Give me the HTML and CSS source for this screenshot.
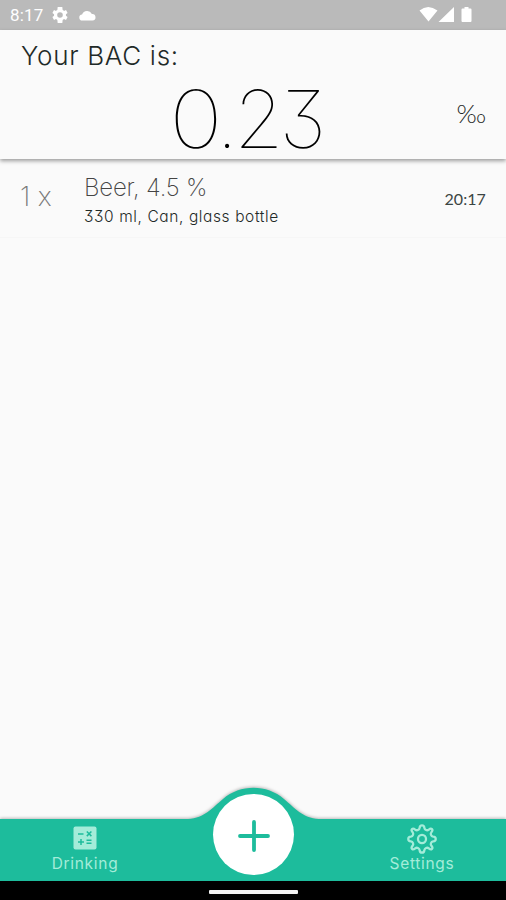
FILE: index.html
```html
<!DOCTYPE html>
<html lang="en">
<head>
    <meta charset="UTF-8">
    <meta name="viewport" content="width=device-width, initial-scale=1.0">
    <title>BAC Calculator</title>
    <link rel="stylesheet" href="styles.css">
</head>
<body>
    <!-- Status Bar -->
    <div class="status-bar">
        <span class="clock">8:17</span>
        <svg class="status-gear" width="16" height="16" viewBox="2 2 20 20">
            <path fill="#fff" fill-rule="evenodd" d="M19.4 13c.1-.7.1-1.3 0-2l2.1-1.6-2-3.5-2.5 1a7 7 0 0 0-1.7-1L14.900 2h-5.800l-.4 3.900a7 7 0 0 0-1.700 1l-2.500-1-2 3.500L4.600 11a8 8 0 0 0 0 2l-2.100 1.600 2 3.500 2.500-1a7 7 0 0 0 1.700 1l.4 3.900h5.800l.4-3.900a7 7 0 0 0 1.700-1l2.500 1 2-3.500zM12 15.500a3.500 3.500 0 1 1 0-7 3.500 3.500 0 0 1 0 7z"/>
        </svg>
        <svg class="status-cloud" width="17" height="11" viewBox="0 0 17 11">
            <path fill="#fff" d="M3.500 10.500a3 3 0 0 1-.4-6 5.400 5.400 0 0 1 9.800-.600 3.300 3.300 0 0 1 .6 6.600z"/>
        </svg>
        <svg class="status-signals" width="56" height="18" viewBox="0 0 56 18">
            <path fill="#fff" d="M.5 4.500Q9-2.500 18.500 4.500L9.500 15.500zM35 1v15H19.500zM43.500 2.500h2V1h4v1.500h2q1 0 1 1V15q0 1-1 1h-8q-1 0-1-1V3.500q0-1 1-1z"/>
        </svg>
    </div>

    <!-- BAC Result -->
    <div class="bac-header">
        <h1>Your BAC is:</h1>
        <div class="bac-row">
            <span class="bac-value"><span class="wide-digit">0</span>.23</span>
            <span class="bac-unit">‰</span>
        </div>
    </div>

    <!-- Drinks -->
    <div class="drink-list">
        <div class="drink-item">
            <span class="drink-count">1 x</span>
            <div class="drink-info">
                <div class="drink-name">Beer, 4.5 %</div>
                <div class="drink-details">330 ml, Can, glass bottle</div>
            </div>
            <span class="drink-time">20:17</span>
        </div>
    </div>

    <!-- Bottom Navigation -->
    <div class="bottom-nav">
        <svg class="nav-shape" width="506" height="96" viewBox="0 0 506 96">
            <path fill="#1dbc9c" d="M0 34H188C205 33 212 23 223 14C240 -1 267 -1 284 14C295 23 302 33 319 34H506V96H0z"/>
        </svg>
        <a class="nav-item" href="#">
            <svg width="24" height="24" viewBox="0 0 24 24">
                <rect x="0.500" y="0.500" width="23" height="23" rx="2" fill="#a4ecd9"/>
                <path fill="none" stroke="#1dbc9c" stroke-width="1.500" d="M5 8h5.500M13.800 5.500l4.600 4.600M18.400 5.500l-4.600 4.600M5 16h6M8 13v6M13.500 14.300h5M13.500 17.300h5"/>
            </svg>
            <span>Drinking</span>
        </a>
        <button class="add-btn">
            <svg width="34" height="34" viewBox="0 0 34 34">
                <path stroke="#1dbc9c" stroke-width="3.800" stroke-linecap="round" d="M17 3v28M3 17h28"/>
            </svg>
        </button>
        <a class="nav-item nav-settings" href="#">
            <svg width="30" height="30" viewBox="0.5 0.5 29 29" fill="none" stroke="#a4ecd9" stroke-width="2.200" stroke-linejoin="round">
                <path d="M12.700 4.200C12.900 .9 17.100 .9 17.300 4.200C17.600 6.300 19.900 7.200 21.600 5.900C24.100 3.700 26.300 5.900 24.100 8.400C22.800 10.100 23.700 12.400 25.800 12.700C29.100 12.900 29.100 17.100 25.800 17.300C23.700 17.600 22.800 19.900 24.100 21.600C26.300 24.100 24.100 26.300 21.600 24.100C19.900 22.800 17.600 23.700 17.300 25.800C17.100 29.100 12.900 29.100 12.700 25.800C12.400 23.700 10.100 22.800 8.400 24.100C5.900 26.300 3.700 24.100 5.900 21.600C7.200 19.900 6.300 17.600 4.200 17.300C.9 17.100 .9 12.900 4.200 12.700C6.300 12.400 7.200 10.100 5.900 8.400C3.700 5.900 5.900 3.700 8.400 5.900C10.100 7.200 12.400 6.300 12.700 4.200z"/>
                <circle cx="15" cy="15" r="3.900"/>
            </svg>
            <span>Settings</span>
        </a>
    </div>

    <!-- System Gesture Bar -->
    <div class="gesture-bar"><div class="gesture-handle"></div></div>
</body>
</html>
```
FILE: styles.css
```css
/* General Styles */
body {
    font-family: Inter, 'Open Sans', sans-serif;
    font-feature-settings: "cv09" 1, "cv11" 1;
    margin: 0;
    height: 900px;
    display: flex;
    flex-direction: column;
    overflow: hidden;
    background-color: #fafafa;
    color: #1f2a28;
}

svg {
    display: block;
}

.status-bar {
    height: 30px;
    display: flex;
    align-items: center;
    background-color: #bababa;
    color: white;
    font-family: Roboto, sans-serif;
    font-size: 17px;
    letter-spacing: 0.2px;
}

.clock {
    width: 42px;
    padding-left: 10px;
    line-height: 32px;
}

.status-cloud {
    margin-left: 11px;
}

.status-signals {
    margin-left: auto;
    margin-right: 31px;
}

.bac-header {
    height: 129px;
    box-shadow: 0 2px 4px rgba(0, 0, 0, 0.38);
}

h1 {
    margin: 0;
    padding: 8px 21px 0;
    font-size: 26px;
    line-height: 36px;
    font-weight: 300;
    letter-spacing: 0.7px;
}

.bac-row {
    display: grid;
    grid-template-columns: 1fr 150px 1fr;
    padding: 0 20px 0 8px;
}

.bac-value {
    grid-column: 2;
    font-size: 80px;
    line-height: 90px;
    font-weight: 100;
    letter-spacing: -4px;
    white-space: nowrap;
    color: #000;
}

.wide-digit {
    display: inline-block;
    margin-right: 1px;
    transform: scaleX(1.13);
}

.bac-unit {
    justify-self: end;
    font-family: Lato, sans-serif;
    font-size: 26px;
    line-height: 78px;
    font-weight: 300;
}

.drink-item {
    height: 79px;
    display: flex;
    align-items: center;
    padding: 5px 20px 0;
    box-sizing: border-box;
    border-bottom: 1px solid #f6f6f6;
}

.drink-count {
    width: 64px;
    margin-top: -8px;
    font-size: 27px;
    font-weight: 200;
    color: #777;
}

.drink-info {
    flex: 1;
}

.drink-name {
    font-size: 24px;
    line-height: 32px;
    font-weight: 200;
    letter-spacing: -0.2px;
    color: #444;
}

.drink-details {
    font-size: 15.5px;
    line-height: 26px;
    font-weight: 350;
    letter-spacing: 0.6px;
}

.drink-time {
    margin-top: -4px;
    font-family: Lato, sans-serif;
    font-size: 16px;
    letter-spacing: 0.1px;
    color: #3a4543;
}

/* Bottom Navigation */
.bottom-nav {
    position: relative;
    height: 62px;
    margin-top: auto;
    display: grid;
    grid-template-columns: 1fr 168px 1fr;
    justify-items: center;
}

.nav-shape {
    position: absolute;
    left: 0;
    bottom: 0;
    filter: drop-shadow(0 -1px 1.5px rgba(0, 0, 0, 0.25));
}

.nav-item {
    position: relative;
    display: flex;
    flex-direction: column;
    align-items: center;
    padding: 7px 0 0 1px;
    color: #a4ecd9;
    font-size: 15.5px;
    line-height: 20px;
    letter-spacing: 0.7px;
    text-decoration: none;
}

.nav-item span {
    margin-top: 4px;
}

.nav-settings {
    padding-top: 5px;
}

.nav-settings span {
    margin-top: 0;
}

.add-btn {
    position: relative;
    width: 81px;
    height: 81px;
    margin-top: -25px;
    padding: 3px 0 0 1px;
    display: flex;
    align-items: center;
    justify-content: center;
    border: none;
    border-radius: 50%;
    background-color: white;
    cursor: pointer;
}

.gesture-bar {
    height: 19px;
    background-color: black;
    display: flex;
    align-items: center;
    justify-content: center;
}

.gesture-handle {
    width: 89px;
    height: 4px;
    margin-top: 2px;
    border-radius: 1px;
    background-color: #f2f2f2;
}
```
